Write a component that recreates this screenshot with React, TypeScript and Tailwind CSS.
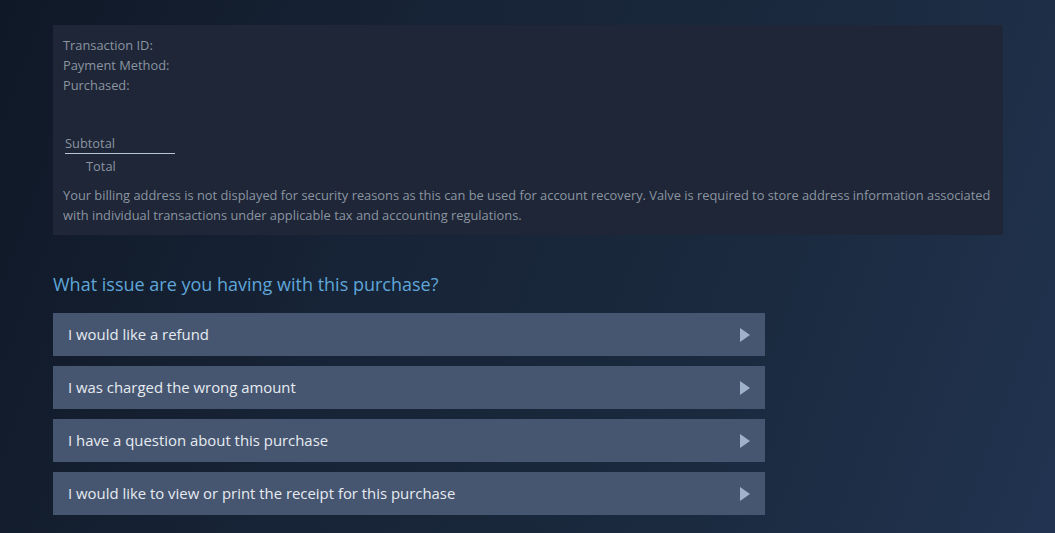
import React from "react";

const options = [
  "I would like a refund",
  "I was charged the wrong amount",
  "I have a question about this purchase",
  "I would like to view or print the receipt for this purchase",
];

export default function App() {
  return (
    <div
      className="w-full h-[533px] overflow-hidden pl-[53px] pt-[25px] bg-[linear-gradient(110deg,#0f1826_0%,#172336_35%,#1b2a3f_70%,#213350_100%)]"
      style={{ fontFamily: '"Open Sans", "Noto Sans", sans-serif' }}
    >
      <div className="w-[950px] bg-[#1e2637] px-[10px] pt-[10px] pb-[10px] text-[12.85px] leading-[20px] text-[#8b95a0]">
        <div>Transaction ID:</div>
        <div>Payment Method:</div>
        <div>Purchased:</div>
        <div className="h-[39px]" />
        <div className="pl-[2px]">
          <div className="w-[110px] border-b border-[#b8c6d3] leading-[19px]">Subtotal</div>
          <div className="pl-[21px] mt-[2px]">Total</div>
        </div>
        <div className="mt-[9px]">
          Your billing address is not displayed for security reasons as this can be used for account recovery. Valve is required to store address information associated with individual transactions under applicable tax and accounting regulations.
        </div>
      </div>
      <h2 className="mt-[37px] text-[18px] leading-[24px] text-[#5fa6d9] font-normal">
        What issue are you having with this purchase?
      </h2>
      <div className="mt-[17px] flex flex-col gap-[10px] w-[712px]">
        {options.map((o) => (
          <div
            key={o}
            className="h-[43px] bg-[#465670] flex items-center justify-between pl-[15px] pr-[15px] text-[14.9px] text-[#e6ebf0]"
          >
            <span>{o}</span>
            <svg width="10" height="14" viewBox="0 0 10 14" className="shrink-0">
              <polygon points="0,0 10,7 0,14" fill="#9fb2c9" />
            </svg>
          </div>
        ))}
      </div>
    </div>
  );
}
